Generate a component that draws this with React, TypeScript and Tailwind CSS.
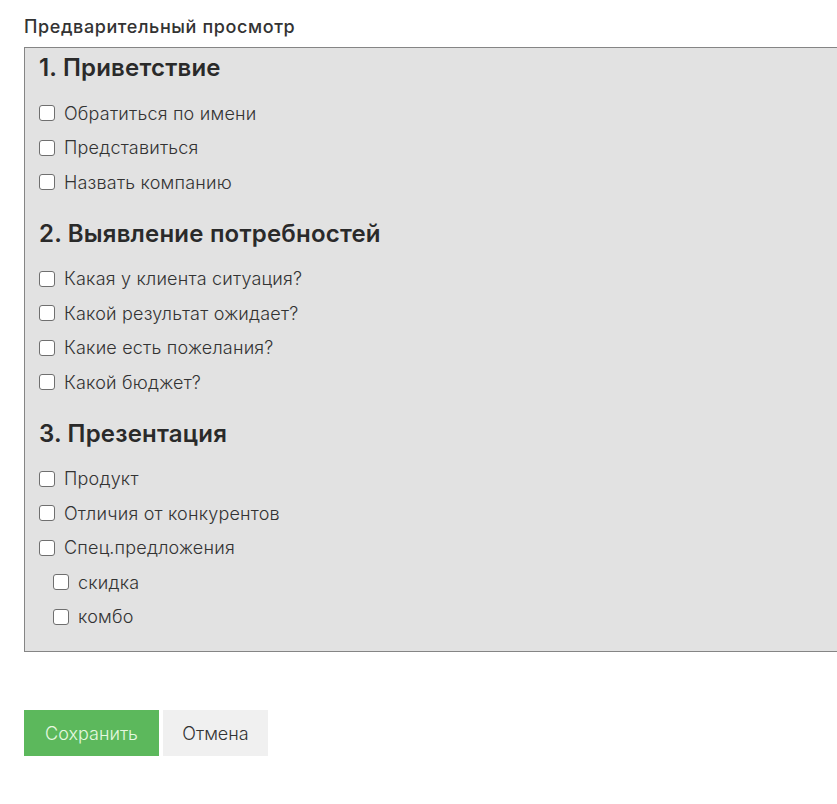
import React from "react";

interface Item {
  label: string;
  nested?: boolean;
}

interface Section {
  title: string;
  items: Item[];
}

const sections: Section[] = [
  {
    title: "1. Приветствие",
    items: [
      { label: "Обратиться по имени" },
      { label: "Представиться" },
      { label: "Назвать компанию" },
    ],
  },
  {
    title: "2. Выявление потребностей",
    items: [
      { label: "Какая у клиента ситуация?" },
      { label: "Какой результат ожидает?" },
      { label: "Какие есть пожелания?" },
      { label: "Какой бюджет?" },
    ],
  },
  {
    title: "3. Презентация",
    items: [
      { label: "Продукт" },
      { label: "Отличия от конкурентов" },
      { label: "Спец.предложения" },
      { label: "скидка", nested: true },
      { label: "комбо", nested: true },
    ],
  },
];

function CheckRow({ label, nested }: Item) {
  return (
    <label className={`flex h-[34.5px] items-center gap-[9px] ${nested ? "pl-[14px]" : ""}`}>
      <input
        type="checkbox"
        className="h-4 w-4 shrink-0 appearance-none rounded-[3px] border border-[#6f6f6f] bg-white"
      />
      <span className="text-[18px] font-light tracking-[0.2px] text-[#333]">{label}</span>
    </label>
  );
}

export default function App() {
  return (
    <div className="min-h-[804px] bg-white pl-6 pt-[14px] font-['Inter','Noto_Sans',sans-serif]">
      <h1 className="mb-[7px] text-[18px] leading-[26px] font-medium tracking-[0.6px] text-[#333]">Предварительный просмотр</h1>

      <div className="border border-r-0 border-[#858585] bg-[#e2e2e2] pb-[17px] pl-[14px] pt-1">
        {sections.map((s, i) => (
          <div key={s.title} className={i > 0 ? "mt-[18px]" : ""}>
            <h2 className="mb-[12px] text-[24px] leading-8 font-semibold tracking-[0.2px] text-[#2a2a2a]">{s.title}</h2>
            {s.items.map((it) => (
              <CheckRow key={it.label} {...it} />
            ))}
          </div>
        ))}
      </div>

      <div className="mt-[58px] flex gap-1">
        <button className="h-[46px] w-[135px] bg-[#5cb85c] text-[18px] font-light text-[#e6f8e0]">Сохранить</button>
        <button className="h-[46px] w-[105px] bg-[#f0f0f0] text-[18px] font-light text-[#333]">Отмена</button>
      </div>
    </div>
  );
}
